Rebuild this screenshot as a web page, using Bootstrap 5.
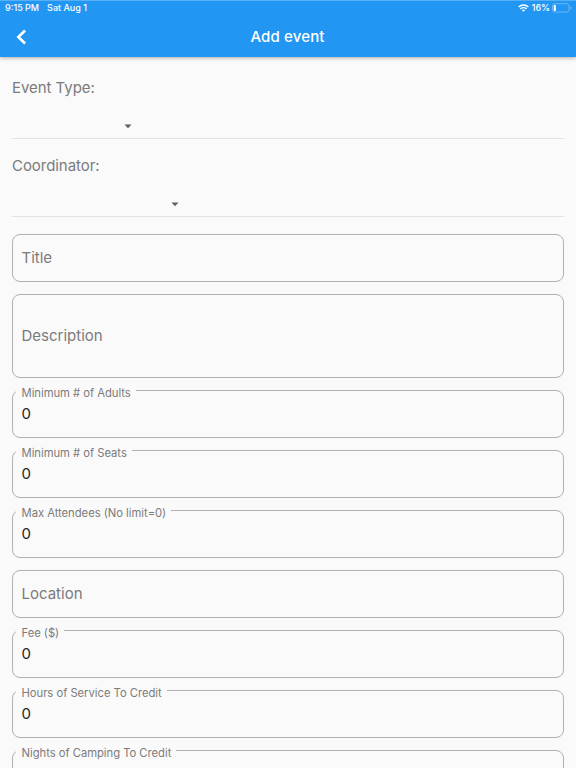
<!DOCTYPE html>
<html lang="en">
<head>
<meta charset="utf-8">
<meta name="viewport" content="width=device-width, initial-scale=1">
<title>Add event</title>
<link rel="stylesheet" href="https://cdn.jsdelivr.net/npm/bootstrap@5.3.0/dist/css/bootstrap.min.css">
<style>
html, body { height: 768px; overflow: hidden; }
body { font-family: Inter, Roboto, sans-serif; background: #fafafa; color: #7b7b7b; }
.app-header { height: 57px; background: #2196f3; border-top: 1px solid #58b0f6; box-shadow: 0 1px 4px rgba(0,0,0,.32); color: #fff; }
.status-bar { height: 14px; padding: 0 4px 0 5px; font-size: 9px; font-weight: 500; line-height: 14px; }
.status-date { margin-left: 8px; }
.status-wifi { margin-right: 3px; }
.status-battery { margin-left: 2px; }
.title-bar { height: 43px; padding-left: 15px; }
.title-side { width: 40px; }
.title-text { font-size: 15px; font-weight: 500; line-height: 20px; letter-spacing: .15px; }
.event-form { height: 711px; overflow: hidden; padding: 20px 12px 0; }
.picker { height: 62px; border-bottom: 1px solid #e3e3e3; margin-bottom: 16px; flex: none; }
.picker-last { margin-bottom: 17px; }
.picker-label, .hint, .value-text { font-size: 15px; line-height: 22px; letter-spacing: 0; }
.picker-label { letter-spacing: -.05px; }
.picker-arrow { margin-top: 25px; }
.arrow-event { margin-left: 112px; }
.arrow-coordinator { margin-left: 159px; }
.field { height: 48px; margin-bottom: 12px; border: 1px solid #b2b2b2; border-radius: 8px; padding: 0 9px 0 8.5px; background: #fafafa; color: inherit; flex: none; }
.field-tall { height: 84px; }
.field-label { top: -6px; left: 3px; padding: 1px 5px 0 5.5px; background: #fafafa; font-size: 11.25px; line-height: 14px; letter-spacing: -.03px; white-space: nowrap; }
.value-text { color: #272727; margin-bottom: 1px; }
</style>
<script src="https://cdn.jsdelivr.net/npm/bootstrap@5.3.0/dist/js/bootstrap.bundle.min.js"></script>
</head>
<body>
<header class="app-header position-relative">
  <div class="status-bar d-flex align-items-center">
    <span>9:15 PM</span><span class="status-date">Sat Aug 1</span>
    <svg class="status-wifi ms-auto" width="11" height="8" viewBox="0 0 11 8" fill="none" stroke="#fff" stroke-width="1.4"><path d="M.6 3a7 7 0 0 1 9.8 0M2.4 5a4.4 4.4 0 0 1 6.2 0"/><path d="M5.5 7.8 3.9 6.2a2.3 2.3 0 0 1 3.2 0z" fill="#fff" stroke="none"/></svg>
    <span class="status-percent">16%</span>
    <svg class="status-battery" width="20" height="10" viewBox="0 0 20 10"><rect x=".5" y=".7" width="16.5" height="8.4" rx="2.2" fill="none" stroke="#6ab8f7"/><rect x="1.7" y="1.9" width="2.2" height="6" rx=".7" fill="#fff"/><path d="M18.2 3.4v3q1.2-.3 1.2-1.5t-1.2-1.5" fill="#7dc1f8"/></svg>
  </div>
  <div class="title-bar d-flex align-items-center justify-content-between">
    <div class="title-side d-flex"><svg width="12" height="16" viewBox="0 0 12 16" fill="none" stroke="#fff" stroke-width="2.6"><path d="M10.1 1.5 3.3 8l6.8 6.5"/></svg></div>
    <div class="title-text">Add event</div>
    <div class="title-side me-3"></div>
  </div>
</header>
<main class="event-form d-flex flex-column">
  <div class="picker">
    <div class="picker-label">Event Type:</div>
    <svg class="picker-arrow arrow-event d-block" width="8" height="5" viewBox="0 0 8 5"><path d="M.5.5h7L4 4.2z" fill="#616161"/></svg>
  </div>
  <div class="picker picker-last">
    <div class="picker-label">Coordinator:</div>
    <svg class="picker-arrow arrow-coordinator d-block" width="8" height="5" viewBox="0 0 8 5"><path d="M.5.5h7L4 4.2z" fill="#616161"/></svg>
  </div>
  <div class="field form-control d-flex align-items-center"><span class="hint">Title</span></div>
  <div class="field field-tall form-control d-flex align-items-center"><span class="hint">Description</span></div>
  <div class="field form-control position-relative d-flex align-items-center"><span class="field-label position-absolute">Minimum # of Adults</span><span class="value-text">0</span></div>
  <div class="field form-control position-relative d-flex align-items-center"><span class="field-label position-absolute">Minimum # of Seats</span><span class="value-text">0</span></div>
  <div class="field form-control position-relative d-flex align-items-center"><span class="field-label position-absolute">Max Attendees (No limit=0)</span><span class="value-text">0</span></div>
  <div class="field form-control d-flex align-items-center"><span class="hint">Location</span></div>
  <div class="field form-control position-relative d-flex align-items-center"><span class="field-label position-absolute">Fee ($)</span><span class="value-text">0</span></div>
  <div class="field form-control position-relative d-flex align-items-center"><span class="field-label position-absolute">Hours of Service To Credit</span><span class="value-text">0</span></div>
  <div class="field form-control position-relative d-flex align-items-center"><span class="field-label position-absolute">Nights of Camping To Credit</span><span class="value-text">0</span></div>
</main>
</body>
</html>
